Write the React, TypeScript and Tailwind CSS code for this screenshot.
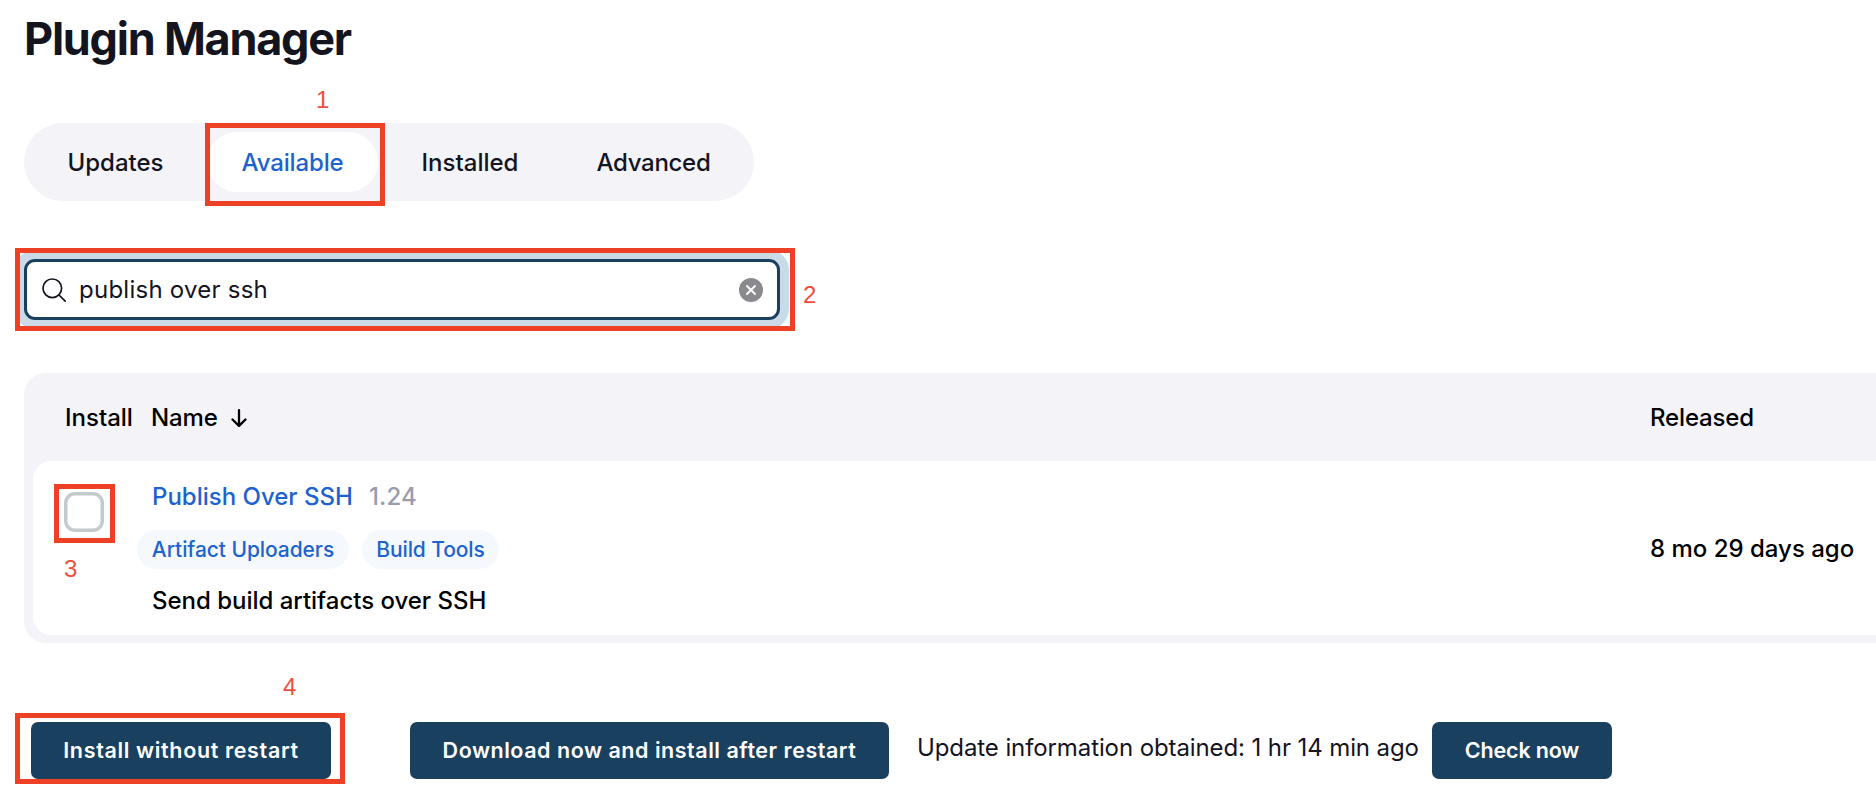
import type { ReactNode } from "react";

const tabs = [
  { label: "Updates", box: "w-[165px] tracking-[0px]" },
  { label: "Available", box: "w-[171px] tracking-[-0.15px]", active: true, step: "1" },
  { label: "Installed", box: "w-[166px] tracking-[0px]" },
  { label: "Advanced", box: "w-[183px] tracking-[-0.3px]" },
];

function Marker({ className }: { className: string }) {
  return <div className={`pointer-events-none absolute border-[5px] border-[#ed4024] ${className}`} />;
}

function Step({ className, children }: { className: string; children: ReactNode }) {
  return (
    <span className={`absolute font-['Liberation_Sans',sans-serif] text-[24px] leading-[24px] font-normal text-[#f04e3e] ${className}`}>
      {children}
    </span>
  );
}

function Tabs() {
  return (
    <nav className="mt-[46px] ml-6 flex h-[78px] w-[730px] gap-[9px] rounded-full bg-[#f3f3f8] p-[9px]">
      {tabs.map((tab) => (
        <a
          key={tab.label}
          className={`relative flex h-[60px] shrink-0 items-center justify-center rounded-full pt-[2px] text-[24px] font-medium ${tab.box} ${
            tab.active ? "bg-white text-[#1d63cf]" : "text-[#14141f]"
          }`}
        >
          {tab.label}
          {tab.step && (
            <>
              <Marker className="-top-[9px] -left-[2px] h-[83px] w-[180px]" />
              <Step className="-top-[44px] left-[109px]">{tab.step}</Step>
            </>
          )}
        </a>
      ))}
    </nav>
  );
}

function Search() {
  return (
    <div className="relative mt-[58px] ml-6 flex h-[61px] w-[756px] items-center rounded-[11px] border-[3px] border-[#1a405f] bg-white pr-[14px] pl-[15px] shadow-[0_0_0_9px_#cbdae7]">
      <svg className="h-6 w-6 shrink-0" viewBox="0 0 24 24" fill="none" stroke="#14141f" strokeWidth="1.7" strokeLinecap="round">
        <circle cx="10.3" cy="10.3" r="9.3" />
        <path d="M17 17L23.2 23.2" />
      </svg>
      <span className="ml-[13px] grow text-[24px] tracking-[0.25px] text-[#14141f]">publish over ssh</span>
      <svg className="h-6 w-6 shrink-0" viewBox="0 0 24 24">
        <circle cx="12" cy="12" r="12" fill="#8a898e" />
        <path d="M8 8L16 16M16 8L8 16" stroke="white" strokeWidth="2" strokeLinecap="round" />
      </svg>
      <Marker className="-top-[14px] -left-[12px] h-[83px] w-[780px]" />
      <Step className="top-[21px] left-[776px]">2</Step>
    </div>
  );
}

function Tag({ className, children }: { className: string; children: ReactNode }) {
  return (
    <a className={`flex h-[39px] items-center justify-center rounded-full bg-[#f5f9fe] text-[21px] font-medium text-[#1d63cf] ${className}`}>
      {children}
    </a>
  );
}

function PluginTable() {
  return (
    <section className="mt-[53px] ml-6 h-[270px] w-[1900px] rounded-[22px] bg-[#f3f3f8] pl-[9px]">
      <div className="flex h-[88px] items-center pt-[2px] pl-[32px] text-[24px] font-medium text-black">
        <span className="w-[86px] tracking-[0px]">Install</span>
        <span className="w-[80px] tracking-[-0.15px]">Name</span>
        <svg className="h-[18px] w-4" viewBox="0 0 16 18" fill="none" stroke="black" strokeWidth="2.3" strokeLinecap="round" strokeLinejoin="round">
          <path d="M8 1.2V16.5M1.5 10.5L8 16.8L14.5 10.5" />
        </svg>
        <span className="ml-[1403px] tracking-[-0.15px]">Released</span>
      </div>
      <div className="flex h-[174px] rounded-[18px] bg-white">
        <div className="w-[104px] shrink-0 pt-[31px] pl-[31px]">
          <div className="relative h-10 w-10 rounded-[11px] bg-white shadow-[inset_0_0_0_3.5px_#c3cbce]">
            <Marker className="-top-[8px] -left-[10px] h-[59px] w-[61px]" />
            <Step className="top-[65px] left-0">3</Step>
          </div>
        </div>
        <div className="flex w-[1513px] shrink-0 flex-col pl-[15px]">
          <div className="mt-[19px] flex h-[34px] items-center text-[24px] font-[450]">
            <a className="w-[217px] tracking-[0px] text-[#1d63cf]">Publish Over SSH</a>
            <span className="tracking-[0.1px] text-[#9b9baf]">1.24</span>
          </div>
          <div className="mt-4 -ml-[15px] flex gap-[13px]">
            <Tag className="w-[212px] tracking-[-0.07px]">Artifact Uploaders</Tag>
            <Tag className="w-[137px] tracking-[-0.1px]">Build Tools</Tag>
          </div>
          <p className="mt-[15px] h-[34px] text-[24px] leading-[34px] font-[450] tracking-[-0.02px] text-black">
            Send build artifacts over SSH
          </p>
        </div>
        <div className="flex h-[174px] items-center pt-[2px] text-[24px] font-[450] tracking-[0px] text-black">8 mo 29 days ago</div>
      </div>
    </section>
  );
}

function Button({ className, children }: { className: string; children: ReactNode }) {
  return (
    <button className={`relative flex h-[57px] shrink-0 items-center justify-center rounded-[7px] bg-[#1a405f] text-[21.5px] font-semibold text-white ${className}`}>
      {children}
    </button>
  );
}

export default function App() {
  return (
    <main className="relative h-[788px] w-[1876px] overflow-hidden bg-white font-['Inter',sans-serif] whitespace-nowrap">
      <h1 className="h-[77px] pl-6 text-[45px] leading-[77px] font-bold tracking-[-1.25px] text-[#14141f]">Plugin Manager</h1>
      <Tabs />
      <Search />
      <PluginTable />
      <footer className="mt-[79px] flex pl-[31px]">
        <Button className="w-[300px] tracking-[0.65px]">
          Install without restart
          <Marker className="-top-[9px] -left-[16px] h-[71px] w-[330px]" />
          <Step className="-top-[47px] left-[252px]">4</Step>
        </Button>
        <Button className="ml-[79px] w-[479px] tracking-[0.53px]">Download now and install after restart</Button>
        <span className="ml-[28px] w-[515px] shrink-0 text-[24px] leading-[51px] tracking-[-0.1px] text-[#14141f]">
          Update information obtained: 1 hr 14 min ago
        </span>
        <Button className="w-[180px] tracking-[-0.15px]">Check now</Button>
      </footer>
    </main>
  );
}
